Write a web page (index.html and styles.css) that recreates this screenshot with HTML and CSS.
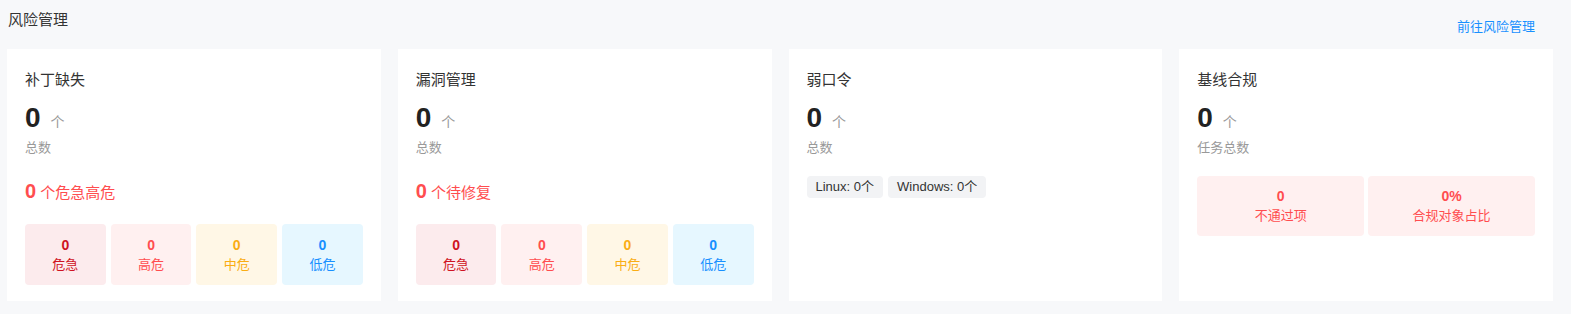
FILE: index.html
```html
<!DOCTYPE html>
<html lang="zh-CN">
<head>
  <meta charset="UTF-8">
  <title>风险管理</title>
  <link rel="stylesheet" href="styles.css">
</head>
<body>
  <div class="panel">
    <div class="panel-head">
      <h3>风险管理</h3>
      <a class="more" href="#">前往风险管理</a>
    </div>

    <div class="cards">
      <div class="card">
        <div class="card-title">补丁缺失</div>
        <div class="total"><b>0</b><span>个</span></div>
        <div class="total-label">总数</div>
        <div class="alert"><b>0</b> 个危急高危</div>
        <div class="levels">
          <div class="level critical"><b>0</b><span>危急</span></div>
          <div class="level high"><b>0</b><span>高危</span></div>
          <div class="level medium"><b>0</b><span>中危</span></div>
          <div class="level low"><b>0</b><span>低危</span></div>
        </div>
      </div>

      <div class="card">
        <div class="card-title">漏洞管理</div>
        <div class="total"><b>0</b><span>个</span></div>
        <div class="total-label">总数</div>
        <div class="alert"><b>0</b> 个待修复</div>
        <div class="levels">
          <div class="level critical"><b>0</b><span>危急</span></div>
          <div class="level high"><b>0</b><span>高危</span></div>
          <div class="level medium"><b>0</b><span>中危</span></div>
          <div class="level low"><b>0</b><span>低危</span></div>
        </div>
      </div>

      <div class="card">
        <div class="card-title">弱口令</div>
        <div class="total"><b>0</b><span>个</span></div>
        <div class="total-label">总数</div>
        <div class="tags">
          <span class="tag">Linux: 0个</span>
          <span class="tag">Windows: 0个</span>
        </div>
      </div>

      <div class="card">
        <div class="card-title">基线合规</div>
        <div class="total"><b>0</b><span>个</span></div>
        <div class="total-label">任务总数</div>
        <div class="stats">
          <div class="stat"><b>0</b><span>不通过项</span></div>
          <div class="stat"><b>0%</b><span>合规对象占比</span></div>
        </div>
      </div>
    </div>
  </div>
</body>
</html>
```

FILE: styles.css
```css
body {
  margin: 0;
  background-color: #f7f8fa;
  font-family: "Liberation Sans", "Noto Sans CJK SC", sans-serif;
  color: #333;
}

.panel {
  padding: 9px 18px 13px 7px;
}

.panel-head {
  display: flex;
  justify-content: space-between;
  align-items: flex-start;
  height: 40px;
}

.panel-head h3 {
  margin: 0 0 0 1px;
  font-size: 15px;
  font-weight: normal;
  line-height: 22px;
  color: #333;
}

.more {
  margin-top: 8px;
  margin-right: 18px;
  font-size: 13px;
  line-height: 20px;
  color: #1890ff;
  text-decoration: none;
}

.cards {
  display: grid;
  grid-template-columns: repeat(4, 1fr);
  gap: 17px;
}

.card {
  background-color: #fff;
  padding: 20px 18px 16px;
  height: 252px;
  box-sizing: border-box;
}

.card-title {
  font-size: 15px;
  line-height: 22px;
  color: #333;
}

.total {
  margin-top: 11px;
  display: flex;
  align-items: baseline;
  line-height: 32px;
}

.total b {
  font-size: 28px;
  color: #222;
}

.total span {
  margin-left: 10px;
  font-size: 14px;
  color: #999;
}

.total-label {
  font-size: 13px;
  line-height: 20px;
  color: #999;
}

.alert {
  margin-top: 20px;
  font-size: 15px;
  line-height: 26px;
  color: #ff4d4f;
}

.alert b {
  font-size: 20px;
}

.levels {
  margin-top: 18px;
  display: grid;
  grid-template-columns: repeat(4, 1fr);
  gap: 5px;
}

.level,
.stat {
  height: 61px;
  border-radius: 4px;
  display: flex;
  flex-direction: column;
  align-items: center;
  justify-content: center;
  font-size: 13px;
  line-height: 20px;
}

.level b,
.stat b {
  font-size: 14px;
}

.critical { background-color: #fcebed; color: #cf1322; }
.high { background-color: #fff0f0; color: #ff4d4f; }
.medium { background-color: #fff7e6; color: #faad14; }
.low { background-color: #e6f7ff; color: #1890ff; }

.tags {
  margin-top: 18px;
  display: flex;
  gap: 5px;
}

.tag {
  padding: 0 9px;
  height: 22px;
  line-height: 22px;
  font-size: 13px;
  color: #333;
  background-color: #f2f3f5;
  border-radius: 4px;
}

.stats {
  margin-top: 18px;
  display: grid;
  grid-template-columns: repeat(2, 1fr);
  gap: 4px;
}

.stat {
  height: 60px;
  background-color: #fff0f0;
  color: #ff4d4f;
}
```
